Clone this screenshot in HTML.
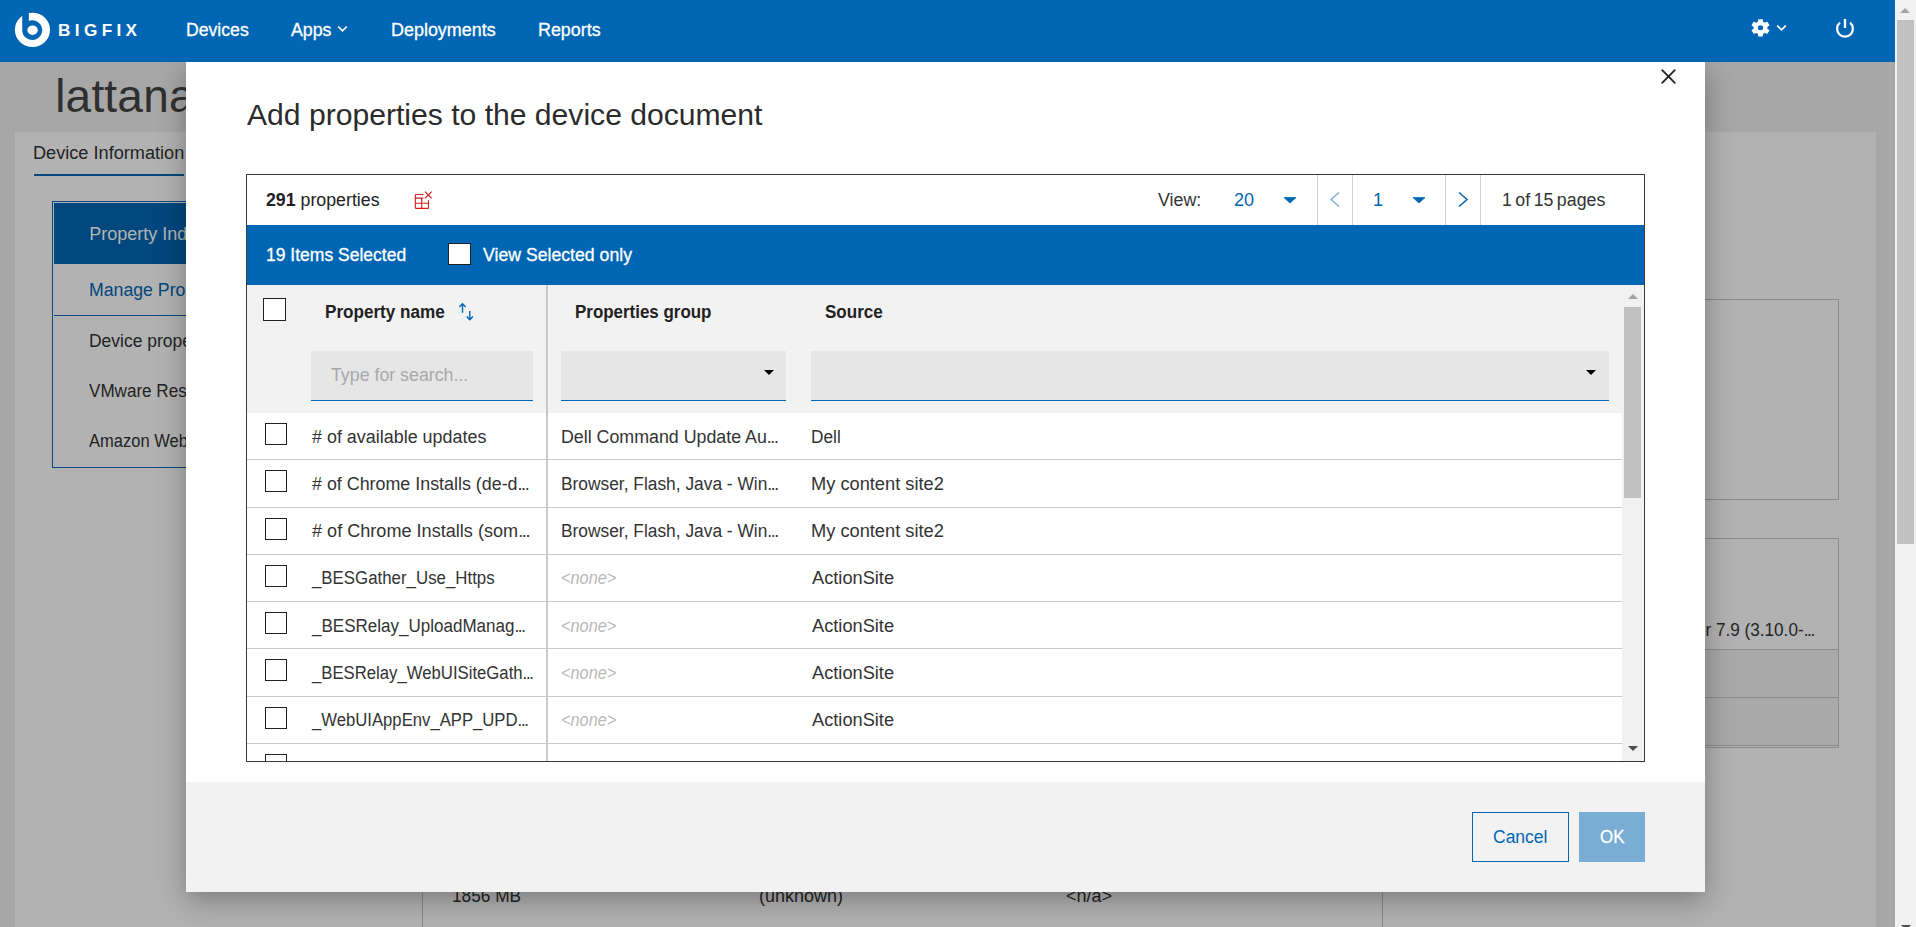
<!DOCTYPE html>
<html lang="en">
<head>
<meta charset="utf-8">
<title>BigFix - Add properties to the device document</title>
<style>
html,body{margin:0;padding:0;}
body{width:1916px;height:927px;overflow:hidden;position:relative;background:#f0f0f0;font-family:"Liberation Sans",sans-serif;color:#333;font-size:18px;}
.abs,.t{position:absolute;}
.t{white-space:nowrap;line-height:1;}
/* ---------- underlying page ---------- */
#page{position:absolute;left:0;top:62px;width:1895px;height:865px;background:#f0f0f0;overflow:hidden;}
#pagepanel{position:absolute;left:15px;top:70px;width:1861px;height:800px;background:#fff;}
#overlay{position:absolute;left:0;top:62px;width:1895px;height:865px;background:rgba(0,0,0,0.3);}
/* ---------- header ---------- */
#hdr{position:absolute;left:0;top:0;width:1895px;height:62px;background:#0066b3;color:#fff;}
#hdr .nav{position:absolute;top:20px;font-size:18px;line-height:20px;white-space:nowrap;-webkit-text-stroke:0.25px #fff;}
/* ---------- page scrollbar ---------- */
#sb{position:absolute;left:1895px;top:0;width:21px;height:927px;background:#f1f1f1;}
#sb .thumb{position:absolute;left:2px;top:20px;width:17px;height:524px;background:#c1c1c1;}
/* ---------- modal ---------- */
#modal{position:absolute;left:186px;top:62px;width:1519px;height:830px;background:#fff;box-shadow:0 8px 27px rgba(0,0,0,0.31);}
#mfoot{position:absolute;left:0;top:720px;width:1519px;height:110px;background:#f2f2f2;}
#grid{position:absolute;left:246px;top:174px;width:1397px;height:586px;border:1px solid #3a3a3a;background:#fff;overflow:hidden;}
.cb{position:absolute;left:265px;width:20px;height:20px;border:1px solid #222;background:#fff;}
.el{letter-spacing:-1.4px;}
.hl{position:absolute;left:247px;width:1375px;height:1px;background:#c9c9c9;}
.fld{position:absolute;top:351px;height:49px;background:#e6e6e6;border-bottom:1px solid #0066b3;}
.tri{position:absolute;width:0;height:0;border-left:5px solid transparent;border-right:5px solid transparent;border-top:5px solid #000;}
.vsep{position:absolute;top:175px;width:1px;height:50px;background:#d0d0d0;}
</style>
</head>
<body>

<!-- underlying page (dimmed) -->
<div id="page">
  <div id="pagepanel"></div>
</div>
<div id="pagecontent">
  <div class="abs" style="left:34px;top:174px;width:150px;height:2px;background:#0066b3;"></div>
  <!-- sidebar -->
  <div class="abs" style="left:52px;top:201px;width:300px;height:265px;border:1px solid #0066b3;background:#fff;"></div>
  <div class="abs" style="left:54px;top:203px;width:300px;height:61px;background:#0066b3;"></div>
  <div class="abs" style="left:54px;top:315px;width:300px;height:1px;background:#0066b3;"></div>
  <!-- right side panels -->
  <div class="abs" style="left:1500px;top:299px;width:337px;height:199px;border:1px solid #c8c8c8;"></div>
  <div class="abs" style="left:1500px;top:538px;width:337px;height:208px;border:1px solid #c8c8c8;"></div>
  <div class="abs" style="left:1500px;top:649px;width:338px;height:48px;background:#f2f2f2;border-top:1px solid #c8c8c8;"></div>
  <div class="abs" style="left:1500px;top:697px;width:338px;height:47px;background:#f2f2f2;border-top:1px solid #c8c8c8;border-bottom:1px solid #c8c8c8;"></div>
  <!-- bottom panel -->
  <div class="abs" style="left:422px;top:760px;width:959px;height:200px;border:1px solid #c8c8c8;border-top:none;background:#fff;"></div>
</div>
<div class="t" id="pgtitle" style="left:55.20px;top:68.76px;font-size:46px;line-height:55px;color:#444;letter-spacing:0.2px;">lattanasio-centos7</div>
<div class="t" id="tab1" style="left:33.00px;top:141.86px;font-size:18px;line-height:22px;transform:scaleX(1.0081);transform-origin:0 0;">Device Information</div>
<div class="t" id="sb1" style="left:89.30px;top:222.86px;font-size:18px;line-height:22px;color:#fff;">Property Index</div>
<div class="t" id="sb2" style="left:89.30px;top:278.56px;font-size:18px;line-height:22px;color:#0066b3;transform:scaleX(0.9830);transform-origin:0 0;">Manage Properties</div>
<div class="t" id="sb3" style="left:89.30px;top:329.76px;font-size:18px;line-height:22px;transform:scaleX(0.9710);transform-origin:0 0;">Device properties</div>
<div class="t" id="sb4" style="left:89.30px;top:379.76px;font-size:18px;line-height:22px;transform:scaleX(0.9480);transform-origin:0 0;">VMware Resources</div>
<div class="t" id="sb5" style="left:89.30px;top:429.76px;font-size:18px;line-height:22px;transform:scaleX(0.9180);transform-origin:0 0;">Amazon Web Services</div>
<div class="t" id="osv" style="right:101.80px;top:618.66px;font-size:18px;line-height:22px;transform:scaleX(0.9530);transform-origin:100% 0;">Linux CentOS Server 7.9 (3.10.0-<span class="el">...</span></div>
<div class="t" id="b1" style="left:452.00px;top:884.96px;font-size:18px;line-height:22px;transform:scaleX(0.9586);transform-origin:0 0;">1856 MB</div>
<div class="t" id="b2" style="left:758.80px;top:884.96px;font-size:18px;line-height:22px;transform:scaleX(0.9979);transform-origin:0 0;">(unknown)</div>
<div class="t" id="b3" style="left:1066.00px;top:884.96px;font-size:18px;line-height:22px;">&lt;n/a&gt;</div>

<div id="overlay"></div>


<!-- modal -->
<div id="mwrap">
<div id="modal">
  <div id="mfoot"></div>
</div>
<svg class="abs" style="left:1660px;top:68px" width="17" height="17" viewBox="0 0 17 17"><path d="M2.2 2.2 L14.8 14.8 M14.8 2.2 L2.2 14.8" stroke="#222" stroke-width="1.8" stroke-linecap="round"/></svg>

<div id="grid"></div>
<!-- grid top bar -->
<svg class="abs" style="left:414px;top:190px" width="20" height="20" viewBox="0 0 20 20"><g fill="none" stroke="#cf1a1a" stroke-width="1.1"><path d="M1.3 4.5 H9.3 M1.3 8.1 H9.3 M1.3 13.2 H14.5 M1.3 4.5 V17.4 Q1.3 18.4 2.3 18.4 H13.5 Q14.5 18.4 14.5 17.4 V10.3 M7.7 8.1 V18.4"/><path d="M11 1.7 L17.6 8.3 M17.6 1.7 L11 8.3" stroke-width="1.2"/></g></svg>
<svg class="abs" style="left:1283px;top:196px" width="14" height="8" viewBox="0 0 14 8"><path d="M1 1.6 H13 L7 7 Z" fill="#0066b3" stroke="#0066b3" stroke-width="0.8" stroke-linejoin="round"/></svg>
<div class="vsep" style="left:1317px"></div>
<svg class="abs" style="left:1329px;top:191px" width="12" height="17" viewBox="0 0 12 17"><path d="M10 1.5 L2 8.5 L10 15.5" fill="none" stroke="#7fb2d9" stroke-width="1.5"/></svg>
<div class="vsep" style="left:1352px"></div>
<svg class="abs" style="left:1412px;top:196px" width="14" height="8" viewBox="0 0 14 8"><path d="M1 1.6 H13 L7 7 Z" fill="#0066b3" stroke="#0066b3" stroke-width="0.8" stroke-linejoin="round"/></svg>
<div class="vsep" style="left:1445px"></div>
<svg class="abs" style="left:1457px;top:191px" width="12" height="17" viewBox="0 0 12 17"><path d="M2 1.5 L10 8.5 L2 15.5" fill="none" stroke="#0066b3" stroke-width="1.5"/></svg>
<div class="vsep" style="left:1480px"></div>

<!-- blue selection bar -->
<div class="abs" style="left:247px;top:225px;width:1397px;height:60px;background:#0066b3;"></div>
<div class="abs" style="left:448px;top:243px;width:21px;height:20px;border:1px solid #222;background:#fff;"></div>

<!-- header row -->
<div class="abs" style="left:247px;top:285px;width:1375px;height:128px;background:#f2f2f2;"></div>
<div class="abs" style="left:263px;top:298px;width:21px;height:21px;border:1px solid #222;background:#fff;"></div>
<svg class="abs" style="left:458px;top:302px" width="17" height="20" viewBox="0 0 17 20"><g fill="none" stroke="#0066b3" stroke-width="1.4"><path d="M4.5 10.8 V2 M1.4 5 L4.5 1.8 L7.6 5"/><path d="M11.8 8.9 V17.5 M8.7 14.6 L11.8 17.8 L14.9 14.6"/></g></svg>
<div class="fld" style="left:311px;width:222px;"></div>
<div class="fld" style="left:561px;width:225px;"></div>
<div class="tri" style="left:764px;top:370px;"></div>
<div class="fld" style="left:811px;width:798px;"></div>
<div class="tri" style="left:1586px;top:370px;"></div>

<!-- rows -->
<div class="cb" style="top:423px"></div><div class="hl" style="top:459px"></div>
<div class="cb" style="top:470px"></div><div class="hl" style="top:507px"></div>
<div class="cb" style="top:518px"></div><div class="hl" style="top:554px"></div>
<div class="cb" style="top:565px"></div><div class="hl" style="top:601px"></div>
<div class="cb" style="top:612px"></div><div class="hl" style="top:648px"></div>
<div class="cb" style="top:659px"></div><div class="hl" style="top:696px"></div>
<div class="cb" style="top:707px"></div><div class="hl" style="top:743px"></div>

<div class="abs" style="left:247px;top:744px;width:1375px;height:17px;overflow:hidden;"><div class="cb" style="left:18px;top:10px"></div>
<div class="t" style="left:64px;top:13px;font-size:18px;line-height:22px;transform:scaleX(.92);transform-origin:0 0;">_WebUIAppEnv_LOGIN_SESSI<span class="el">...</span></div>
<div class="t" style="left:314px;top:13px;font-size:18px;line-height:22px;transform:scaleX(.94);transform-origin:0 0;">Dell Command | Update for <span class="el">...</span></div>
<div class="t" style="left:564px;top:13px;font-size:18px;line-height:22px;">Dell</div></div>
<!-- column separator -->
<div class="abs" style="left:546px;top:285px;width:2px;height:476px;background:#c9c9c9;"></div>
<!-- inner scrollbar -->
<div class="abs" style="left:1622px;top:285px;width:22px;height:476px;background:#f1f1f1;"></div>
<div class="abs" style="left:1624px;top:307px;width:17px;height:191px;background:#c1c1c1;"></div>
<div class="abs" style="left:1628px;top:294px;width:0;height:0;border-left:5px solid transparent;border-right:5px solid transparent;border-bottom:5px solid #a3a3a3;"></div>
<div class="abs" style="left:1628px;top:746px;width:0;height:0;border-left:5px solid transparent;border-right:5px solid transparent;border-top:5px solid #505050;"></div>

<!-- footer buttons -->
<div class="abs" style="left:1472px;top:812px;width:95px;height:48px;border:1px solid #0066b3;background:#f2f2f2;"></div>
<div class="abs" style="left:1579px;top:812px;width:66px;height:50px;background:#7aadd4;"></div>

<div class="t" id="mtitle" style="left:247.20px;top:96.91px;font-size:30px;line-height:36px;color:#2b2b2b;transform:scaleX(1.0035);transform-origin:0 0;">Add properties to the device document</div>
<div class="t" id="cnt" style="left:266.40px;top:189.06px;font-size:18px;line-height:22px;color:#222;transform:scaleX(0.9864);transform-origin:0 0;"><b>291</b> properties</div>
<div class="t" id="pv" style="left:1157.60px;top:189.06px;font-size:18px;line-height:22px;transform:scaleX(0.9895);transform-origin:0 0;">View:</div>
<div class="t" id="p20" style="left:1234.00px;top:189.06px;font-size:18px;line-height:22px;color:#0066b3;transform:scaleX(1.0028);transform-origin:0 0;">20</div>
<div class="t" id="p1" style="left:1372.90px;top:189.06px;font-size:18px;line-height:22px;color:#0066b3;">1</div>
<div class="t" id="pof" style="left:1501.60px;top:189.06px;font-size:18px;line-height:22px;word-spacing:-1.5px;transform:scaleX(0.9876);transform-origin:0 0;">1 of 15 pages</div>
<div class="t" id="sel" style="left:265.70px;top:243.66px;font-size:18px;line-height:22px;color:#fff;-webkit-text-stroke:0.3px #fff;transform:scaleX(0.9727);transform-origin:0 0;">19 Items Selected</div>
<div class="t" id="vso" style="left:483.20px;top:243.66px;font-size:18px;line-height:22px;color:#fff;-webkit-text-stroke:0.3px #fff;transform:scaleX(0.9818);transform-origin:0 0;">View Selected only</div>
<div class="t" id="h1" style="left:325.10px;top:302.34px;font-size:17.5px;line-height:21px;font-weight:bold;color:#222;transform:scaleX(0.9773);transform-origin:0 0;">Property name</div>
<div class="t" id="h2" style="left:574.80px;top:302.34px;font-size:17.5px;line-height:21px;font-weight:bold;color:#222;transform:scaleX(0.9675);transform-origin:0 0;">Properties group</div>
<div class="t" id="h3" style="left:824.80px;top:302.34px;font-size:17.5px;line-height:21px;font-weight:bold;color:#222;transform:scaleX(0.9722);transform-origin:0 0;">Source</div>
<div class="t" id="ph" style="left:331.20px;top:363.56px;font-size:18px;line-height:22px;color:#a9a9a9;transform:scaleX(0.9870);transform-origin:0 0;">Type for search...</div>
<div class="t" id="bc" style="left:1493.40px;top:825.76px;font-size:18px;line-height:22px;color:#0066b3;transform:scaleX(0.9720);transform-origin:0 0;">Cancel</div>
<div class="t" id="bo" style="left:1599.60px;top:825.76px;font-size:18px;line-height:22px;color:#fff;-webkit-text-stroke:0.3px #fff;transform:scaleX(0.9410);transform-origin:0 0;">OK</div>
<div class="t" id="r0a" style="left:312.00px;top:425.96px;font-size:18px;line-height:22px;transform:scaleX(0.9955);transform-origin:0 0;"># of available updates</div>
<div class="t" id="r0b" style="left:560.60px;top:425.96px;font-size:18px;line-height:22px;transform:scaleX(0.9889);transform-origin:0 0;">Dell Command Update Au<span class="el">...</span></div>
<div class="t" id="r0c" style="left:811.20px;top:425.96px;font-size:18px;line-height:22px;transform:scaleX(0.9586);transform-origin:0 0;">Dell</div>
<div class="t" id="r1a" style="left:312.00px;top:473.13px;font-size:18px;line-height:22px;transform:scaleX(0.9925);transform-origin:0 0;"># of Chrome Installs (de-d<span class="el">...</span></div>
<div class="t" id="r1b" style="left:560.60px;top:473.13px;font-size:18px;line-height:22px;transform:scaleX(0.9639);transform-origin:0 0;">Browser, Flash, Java - Win<span class="el">...</span></div>
<div class="t" id="r1c" style="left:811.40px;top:473.13px;font-size:18px;line-height:22px;transform:scaleX(1.0132);transform-origin:0 0;">My content site2</div>
<div class="t" id="r2a" style="left:312.00px;top:520.30px;font-size:18px;line-height:22px;transform:scaleX(1.0052);transform-origin:0 0;"># of Chrome Installs (som<span class="el">...</span></div>
<div class="t" id="r2b" style="left:560.60px;top:520.30px;font-size:18px;line-height:22px;transform:scaleX(0.9639);transform-origin:0 0;">Browser, Flash, Java - Win<span class="el">...</span></div>
<div class="t" id="r2c" style="left:811.40px;top:520.30px;font-size:18px;line-height:22px;transform:scaleX(1.0132);transform-origin:0 0;">My content site2</div>
<div class="t" id="r3a" style="left:311.50px;top:567.47px;font-size:18px;line-height:22px;transform:scaleX(0.9360);transform-origin:0 0;">_BESGather_Use_Https</div>
<div class="t" id="r3b" style="left:560.60px;top:567.47px;font-size:18px;line-height:22px;color:#b9b9b9;font-style:italic;transform:scaleX(0.9067);transform-origin:0 0;">&lt;none&gt;</div>
<div class="t" id="r3c" style="left:811.50px;top:567.47px;font-size:18px;line-height:22px;transform:scaleX(1.0125);transform-origin:0 0;">ActionSite</div>
<div class="t" id="r4a" style="left:311.50px;top:614.64px;font-size:18px;line-height:22px;transform:scaleX(0.9452);transform-origin:0 0;">_BESRelay_UploadManag<span class="el">...</span></div>
<div class="t" id="r4b" style="left:560.60px;top:614.64px;font-size:18px;line-height:22px;color:#b9b9b9;font-style:italic;transform:scaleX(0.9067);transform-origin:0 0;">&lt;none&gt;</div>
<div class="t" id="r4c" style="left:811.50px;top:614.64px;font-size:18px;line-height:22px;transform:scaleX(1.0125);transform-origin:0 0;">ActionSite</div>
<div class="t" id="r5a" style="left:311.50px;top:661.81px;font-size:18px;line-height:22px;transform:scaleX(0.9285);transform-origin:0 0;">_BESRelay_WebUISiteGath<span class="el">...</span></div>
<div class="t" id="r5b" style="left:560.60px;top:661.81px;font-size:18px;line-height:22px;color:#b9b9b9;font-style:italic;transform:scaleX(0.9067);transform-origin:0 0;">&lt;none&gt;</div>
<div class="t" id="r5c" style="left:811.50px;top:661.81px;font-size:18px;line-height:22px;transform:scaleX(1.0125);transform-origin:0 0;">ActionSite</div>
<div class="t" id="r6a" style="left:311.50px;top:708.98px;font-size:18px;line-height:22px;transform:scaleX(0.9268);transform-origin:0 0;">_WebUIAppEnv_APP_UPD<span class="el">...</span></div>
<div class="t" id="r6b" style="left:560.60px;top:708.98px;font-size:18px;line-height:22px;color:#b9b9b9;font-style:italic;transform:scaleX(0.9067);transform-origin:0 0;">&lt;none&gt;</div>
<div class="t" id="r6c" style="left:811.50px;top:708.98px;font-size:18px;line-height:22px;transform:scaleX(1.0125);transform-origin:0 0;">ActionSite</div>

</div><!-- /mwrap -->

<!-- header -->
<div id="hdr">
  <svg class="abs" style="left:14px;top:12px" width="37" height="36" viewBox="0 0 37 36">
    <ellipse cx="18.45" cy="17.9" rx="17.6" ry="17.1" fill="#fff"/>
    <path d="M8.25 -1 H14.8 V9 A10 9.8 0 1 1 8.25 18.2 Z" fill="#0066b3"/>
    <ellipse cx="18.6" cy="18.2" rx="5.2" ry="4.8" fill="#fff"/>
  </svg>
  <svg class="abs" style="left:337px;top:25px" width="11" height="8" viewBox="0 0 11 8"><path d="M1.2 1.5 L5.5 5.8 L9.8 1.5" fill="none" stroke="#fff" stroke-width="1.7"/></svg>
  <div class="t" id="brand" style="left:58.20px;top:21.31px;font-size:17px;line-height:20px;color:#fff;font-weight:bold;letter-spacing:4.3px;transform:scaleX(1.0117);transform-origin:0 0;">BIGFIX</div>
<div class="t" id="n1" style="left:185.90px;top:19.46px;font-size:18px;line-height:22px;color:#fff;-webkit-text-stroke:0.3px #fff;transform:scaleX(0.9799);transform-origin:0 0;">Devices</div>
<div class="t" id="n2" style="left:291.20px;top:19.46px;font-size:18px;line-height:22px;color:#fff;-webkit-text-stroke:0.3px #fff;transform:scaleX(0.9872);transform-origin:0 0;">Apps</div>
<div class="t" id="n3" style="left:391.00px;top:19.46px;font-size:18px;line-height:22px;color:#fff;-webkit-text-stroke:0.3px #fff;transform:scaleX(0.9963);transform-origin:0 0;">Deployments</div>
<div class="t" id="n4" style="left:537.80px;top:19.46px;font-size:18px;line-height:22px;color:#fff;-webkit-text-stroke:0.3px #fff;transform:scaleX(0.9941);transform-origin:0 0;">Reports</div>

  <!-- gear -->
  <svg class="abs" style="left:1748.9px;top:17.2px" width="23" height="21.6" viewBox="0 0 24 24" preserveAspectRatio="none"><path fill="#fff" fill-rule="evenodd" d="M19.14 12.94c.04-.3.06-.61.06-.94 0-.32-.02-.64-.07-.94l2.03-1.58c.18-.14.23-.41.12-.61l-1.92-3.32c-.12-.22-.37-.29-.59-.22l-2.39.96c-.5-.38-1.03-.7-1.62-.94l-.36-2.54c-.04-.24-.24-.41-.48-.41h-3.84c-.24 0-.43.17-.47.41l-.36 2.54c-.59.24-1.13.57-1.62.94l-2.39-.96c-.22-.08-.47 0-.59.22L2.74 8.87c-.12.21-.08.47.12.61l2.03 1.58c-.05.3-.09.63-.09.94s.02.64.07.94l-2.03 1.58c-.18.14-.23.41-.12.61l1.92 3.32c.12.22.37.29.59.22l2.39-.96c.5.38 1.03.7 1.62.94l.36 2.54c.05.24.24.41.48.41h3.84c.24 0 .44-.17.47-.41l.36-2.54c.59-.24 1.13-.56 1.62-.94l2.39.96c.22.08.47 0 .59-.22l1.92-3.32c.12-.22.07-.47-.12-.61l-2.01-1.58zM12 14.8a2.8 2.8 0 1 1 0-5.6a2.8 2.8 0 0 1 0 5.6z"/></svg>
  <svg class="abs" style="left:1776px;top:24px" width="11" height="8" viewBox="0 0 11 8"><path d="M1.2 1.6 L5.5 5.9 L9.8 1.6" fill="none" stroke="#fff" stroke-width="1.6"/></svg>
  <!-- power -->
  <svg class="abs" style="left:1835px;top:18px" width="20" height="21" viewBox="0 0 20 21"><path d="M5.0 4.7 A7.9 7.9 0 1 0 15.0 4.7" fill="none" stroke="#fff" stroke-width="2.2"/><path d="M10 1 L10 10" stroke="#fff" stroke-width="2.3"/></svg>
</div>

<!-- page scrollbar -->
<div id="sb"><div class="thumb"></div>
  <div class="abs" style="left:5px;top:8px;width:0;height:0;border-left:5px solid transparent;border-right:5px solid transparent;border-bottom:5px solid #a3a3a3;"></div>
  <div class="abs" style="left:5.5px;top:925px;width:0;height:0;border-left:5px solid transparent;border-right:5px solid transparent;border-top:5px solid #505050;"></div>
</div>
</body>
</html>
